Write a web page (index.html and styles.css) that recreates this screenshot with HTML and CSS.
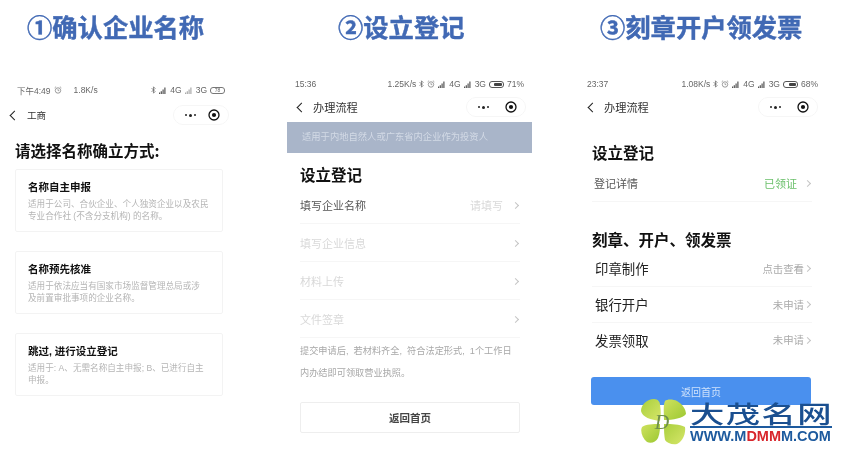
FILE: index.html
```html
<!DOCTYPE html>
<html lang="zh-CN">

<head>
    <meta charset="UTF-8">
    <meta name="viewport" content="width=device-width, initial-scale=1.0">
    <title>办理流程</title>
    <link rel="stylesheet" href="styles.css">
</head>

<body>
    <!-- shared status bar and capsule icons -->
    <svg class="defs" width="0" height="0">
        <symbol id="bt" viewBox="0 0 6 10">
            <path d="M0.6 2.6 L5 7 L3 9 V1 L5 3 L0.6 7.4" fill="none" stroke="#666" stroke-width="0.9" />
        </symbol>
        <symbol id="alarm" viewBox="0 0 10 10">
            <circle cx="5" cy="5.6" r="3.4" fill="none" stroke="#777" stroke-width="0.9" />
            <path d="M0.8 2.4 L2.6 0.8 M9.2 2.4 L7.4 0.8 M5 3.6 V5.8 H6.6" fill="none" stroke="#777" stroke-width="0.8" />
        </symbol>
        <symbol id="signal" viewBox="0 0 8 7">
            <path d="M0.5 7 V5.6 M2.3 7 V4.2 M4.1 7 V2.6 M5.9 7 V0.6" stroke="#555" stroke-width="1.2" />
        </symbol>
        <symbol id="target" viewBox="0 0 12 12">
            <circle cx="6" cy="6" r="5" fill="none" stroke="#111" stroke-width="1.3" />
            <circle cx="6" cy="6" r="2.1" fill="#111" />
        </symbol>
    </svg>

    <main class="board">
        <!-- step 1 -->
        <section class="shot shot-name">
            <h1 class="step-title">①确认企业名称</h1>
            <div class="status-bar">
                <div class="status-side">
                    <span>下午4:49</span>
                    <svg class="ico-alarm"><use href="#alarm" /></svg>
                    <span class="speed">1.8K/s</span>
                </div>
                <div class="status-side">
                    <svg class="ico-bt"><use href="#bt" /></svg>
                    <svg class="ico-signal"><use href="#signal" /></svg>
                    <span>4G</span>
                    <svg class="ico-signal faded"><use href="#signal" /></svg>
                    <span>3G</span>
                    <span class="battery-num">78</span>
                </div>
            </div>
            <div class="nav-bar">
                <i class="back"></i>
                <span class="nav-title">工商</span>
                <div class="capsule">
                    <span class="dots"><b></b><b class="big"></b><b></b></span>
                    <svg class="ico-target"><use href="#target" /></svg>
                </div>
            </div>
            <h2 class="choose-title">请选择名称确立方式:</h2>
            <div class="card">
                <h3>名称自主申报</h3>
                <p>适用于公司、合伙企业、个人独资企业以及农民<br>专业合作社 (不含分支机构) 的名称。</p>
            </div>
            <div class="card">
                <h3>名称预先核准</h3>
                <p>适用于依法应当有国家市场监督管理总局或涉<br>及前置审批事项的企业名称。</p>
            </div>
            <div class="card">
                <h3>跳过, 进行设立登记</h3>
                <p>适用于: A、无需名称自主申报; B、已进行自主<br>申报。</p>
            </div>
        </section>

        <!-- step 2 -->
        <section class="shot shot-register">
            <h1 class="step-title">②设立登记</h1>
            <div class="status-bar">
                <div class="status-side"><span>15:36</span></div>
                <div class="status-side">
                    <span>1.25K/s</span>
                    <svg class="ico-bt"><use href="#bt" /></svg>
                    <svg class="ico-alarm"><use href="#alarm" /></svg>
                    <svg class="ico-signal"><use href="#signal" /></svg>
                    <span>4G</span>
                    <svg class="ico-signal"><use href="#signal" /></svg>
                    <span>3G</span>
                    <span class="battery"><i class="w71"></i></span>
                    <span>71%</span>
                </div>
            </div>
            <div class="nav-bar">
                <i class="back"></i>
                <span class="nav-title">办理流程</span>
                <div class="capsule">
                    <span class="dots"><b></b><b class="big"></b><b></b></span>
                    <svg class="ico-target"><use href="#target" /></svg>
                </div>
            </div>
            <div class="banner">适用于内地自然人或广东省内企业作为投资人</div>
            <h2 class="block-title">设立登记</h2>
            <div class="rows">
                <div class="row"><span>填写企业名称</span><span class="row-end"><span class="hint">请填写</span><i class="chev"></i></span></div>
                <div class="row off"><span>填写企业信息</span><span class="row-end"><i class="chev"></i></span></div>
                <div class="row off"><span>材料上传</span><span class="row-end"><i class="chev"></i></span></div>
                <div class="row off"><span>文件签章</span><span class="row-end"><i class="chev"></i></span></div>
            </div>
            <p class="note">提交申请后, 若材料齐全, 符合法定形式, 1个工作日<br>内办结即可领取营业执照。</p>
            <div class="btn btn-plain">返回首页</div>
        </section>

        <!-- step 3 -->
        <section class="shot shot-finish">
            <h1 class="step-title">③刻章开户领发票</h1>
            <div class="status-bar">
                <div class="status-side"><span>23:37</span></div>
                <div class="status-side">
                    <span>1.08K/s</span>
                    <svg class="ico-bt"><use href="#bt" /></svg>
                    <svg class="ico-alarm"><use href="#alarm" /></svg>
                    <svg class="ico-signal"><use href="#signal" /></svg>
                    <span>4G</span>
                    <svg class="ico-signal"><use href="#signal" /></svg>
                    <span>3G</span>
                    <span class="battery"><i class="w68"></i></span>
                    <span>68%</span>
                </div>
            </div>
            <div class="nav-bar">
                <i class="back"></i>
                <span class="nav-title">办理流程</span>
                <div class="capsule">
                    <span class="dots"><b></b><b class="big"></b><b></b></span>
                    <svg class="ico-target"><use href="#target" /></svg>
                </div>
            </div>
            <h2 class="block-title">设立登记</h2>
            <div class="rows">
                <div class="row"><span>登记详情</span><span class="row-end"><span class="done">已领证</span><i class="chev"></i></span></div>
            </div>
            <h2 class="block-title second">刻章、开户、领发票</h2>
            <div class="rows big-rows">
                <div class="row"><span>印章制作</span><span class="row-end"><span class="state">点击查看</span><i class="chev"></i></span></div>
                <div class="row"><span>银行开户</span><span class="row-end"><span class="state">未申请</span><i class="chev"></i></span></div>
                <div class="row"><span>发票领取</span><span class="row-end"><span class="state">未申请</span><i class="chev"></i></span></div>
            </div>
            <div class="btn btn-blue">返回首页</div>
        </section>
    </main>

    <!-- site watermark, sits on top of the third shot -->
    <div class="watermark">
        <svg class="clover" viewBox="0 0 48 50">
            <defs>
                <linearGradient id="leaf-a" x1="0" y1="0" x2="1" y2="1">
                    <stop offset="0" stop-color="#a9cf3c" />
                    <stop offset="1" stop-color="#d6e66a" />
                </linearGradient>
                <linearGradient id="leaf-b" x1="1" y1="1" x2="0" y2="0">
                    <stop offset="0" stop-color="#9cc832" />
                    <stop offset="1" stop-color="#cfe25e" />
                </linearGradient>
            </defs>
            <path d="M21 24 C12 23 3 20 2 14 C2 8 8 2 15 2 C19 2 21 5 21 8 C22 14 22 19 21 24 Z" fill="url(#leaf-a)" />
            <path d="M25 23 C25 16 24 8 26 4 C28 2 34 2 38 4 C43 7 47 12 47 17 C44 21 34 23 25 23 Z" fill="url(#leaf-b)" />
            <path d="M21 27 C14 27 7 27 3 30 C1 34 3 41 8 45 C12 47 17 45 19 41 C21 36 21 31 21 27 Z" fill="url(#leaf-b)" />
            <path d="M25 27 C33 27 40 27 46 30 C47 36 44 44 38 47 C33 48 28 46 26 43 C25 38 25 32 25 27 Z" fill="url(#leaf-a)" />
            <text x="23" y="32" class="clover-d">D</text>
        </svg>
        <div class="mark-text">
            <div class="mark-cn"><span>大茂名网</span></div>
            <div class="mark-url">WWW.M<em>DMM</em>M.COM</div>
        </div>
    </div>
</body>

</html>
```

FILE: styles.css
```css
/* Global Styles */
* {
    box-sizing: border-box;
}

body {
    margin: 0;
    width: 841px;
    height: 454px;
    overflow: hidden;
    position: relative;
    background-color: #fff;
    color: #111;
    font-family: "Liberation Sans", "Noto Sans CJK SC", sans-serif;
}

.defs {
    position: absolute;
}

.board {
    display: grid;
    grid-template-columns: 280px 281px 280px;
    filter: blur(0.35px);
}

.shot {
    height: 454px;
}

.step-title {
    margin: 0;
    height: 52px;
    line-height: 52px;
    font-family: "Noto Sans CJK SC", sans-serif;
    font-size: 25.3px;
    font-weight: 700;
    color: #4169b4;
    -webkit-text-stroke: 0.4px #4169b4;
    white-space: nowrap;
}

/* Status bar */
.status-bar {
    display: flex;
    justify-content: space-between;
    align-items: center;
    height: 14px;
    font-size: 8.5px;
    color: #666;
    white-space: nowrap;
}

.status-side {
    display: flex;
    align-items: center;
    gap: 3px;
}

.speed {
    margin-left: 9px;
}

.ico-bt {
    width: 5px;
    height: 8px;
}

.ico-alarm {
    width: 8px;
    height: 8px;
}

.ico-signal {
    width: 8px;
    height: 7px;
}

.ico-signal.faded {
    opacity: 0.5;
}

.battery {
    display: block;
    width: 15px;
    height: 7px;
    padding: 1px;
    border: 1px solid #555;
    border-radius: 3px;
}

.battery i {
    display: block;
    height: 100%;
    background-color: #444;
    border-radius: 1px;
}

.battery .w71 {
    width: 71%;
    margin-left: auto;
}

.battery .w68 {
    width: 68%;
    margin-left: auto;
}

.battery-num {
    width: 15px;
    height: 7px;
    border: 1px solid #777;
    border-radius: 3px;
    font-size: 5px;
    line-height: 5px;
    text-align: center;
}

/* Nav bar */
.nav-bar {
    display: flex;
    align-items: center;
    height: 28px;
}

.back {
    width: 7px;
    height: 7px;
    margin-left: 2px;
    border-left: 1.2px solid #222;
    border-bottom: 1.2px solid #222;
    transform: rotate(45deg);
}

.nav-title {
    margin-left: 8px;
    font-size: 11.2px;
    color: #333;
}

.capsule {
    display: flex;
    justify-content: space-between;
    align-items: center;
    width: 60px;
    height: 20px;
    margin-left: auto;
    padding: 0 8px 0 11px;
    border: 1px solid #f6f6f6;
    border-radius: 10px;
}

.dots {
    display: flex;
    align-items: center;
    gap: 2px;
}

.dots b {
    width: 2px;
    height: 2px;
    border-radius: 50%;
    background-color: #222;
}

.dots .big {
    width: 3px;
    height: 3px;
}

.ico-target {
    width: 12px;
    height: 12px;
}

/* Step 1 */
.shot-name {
    padding: 0 57px 0 15px;
}

.shot-name .step-title {
    margin-left: -15px;
    padding-left: 27px;
}

.shot-name .status-bar {
    margin-top: 31px;
    margin-right: -2px;
    padding-left: 2px;
}

.shot-name .nav-bar {
    margin: 4px -6px 0 -6px;
}

.shot-name .nav-title {
    margin-left: 9px;
    font-size: 9.6px;
}

.shot-name .capsule {
    width: 56px;
}

.choose-title {
    margin: 11px 0 9px;
    font-family: "Noto Sans CJK SC", sans-serif;
    font-size: 15.5px;
    line-height: 20px;
    font-weight: 700;
    white-space: nowrap;
}

.card {
    height: 63px;
    margin-bottom: 19px;
    padding: 10px 6px 0 12px;
    border: 1px solid #f3f3f3;
    border-radius: 2px;
}

.card h3 {
    margin: 0;
    font-size: 10.5px;
    line-height: 14px;
    font-weight: 700;
}

.card p {
    margin: 4px 0 0;
    font-size: 8.6px;
    line-height: 12px;
    color: #b5b5b5;
    white-space: nowrap;
}

/* Step 2 */
.shot-register {
    padding: 0 29px 0 7px;
}

.shot-register .step-title {
    padding-left: 51px;
}

.shot-register .status-bar {
    margin-top: 25px;
    padding: 0 8px;
}

.shot-register .nav-bar {
    margin-top: 2px;
    padding: 0 6px 0 9px;
}

.banner {
    height: 31px;
    margin-top: 1px;
    padding-left: 15px;
    line-height: 31px;
    font-size: 9.3px;
    color: #d3dae6;
    background-color: #a9b5c9;
    white-space: nowrap;
}

.block-title {
    margin: 11px 0 0 13px;
    font-family: "Noto Sans CJK SC", sans-serif;
    font-size: 15.5px;
    line-height: 20px;
    font-weight: 700;
}

.rows {
    margin: 2px 12px 0 13px;
}

.row {
    display: flex;
    justify-content: space-between;
    align-items: center;
    height: 38px;
    border-bottom: 1px solid #f6f6f6;
    font-size: 11px;
    color: #555;
}

.row.off {
    color: #d9d9d9;
}

.row-end {
    display: flex;
    align-items: center;
}

.hint {
    margin-right: 9px;
    color: #d9d9d9;
}

.chev {
    display: block;
    width: 5px;
    height: 5px;
    margin: 1px 2px 0 1px;
    border-top: 1px solid #c4c4c4;
    border-right: 1px solid #c4c4c4;
    transform: rotate(45deg);
}

.note {
    margin: 3px 0 0 13px;
    font-size: 9.2px;
    line-height: 21.5px;
    word-spacing: 2.5px;
    color: #a8a8a8;
    white-space: nowrap;
}

.btn {
    display: flex;
    justify-content: center;
    align-items: center;
    border-radius: 2px;
}

.btn-plain {
    height: 31px;
    margin: 18px 12px 0 13px;
    border: 1px solid #eee;
    font-size: 10.5px;
    font-weight: 700;
    color: #444;
}

/* Step 3 */
.shot-finish {
    padding: 0 23px 0 26px;
}

.shot-finish .step-title {
    padding-left: 13px;
}

.shot-finish .status-bar {
    margin-top: 25px;
}

.shot-finish .nav-bar {
    margin-top: 2px;
}

.shot-finish .block-title {
    margin: 21px 0 0 5px;
}

.shot-finish .block-title.second {
    margin-top: 27px;
}

.shot-finish .rows {
    margin: 4px 6px 0 5px;
}

.shot-finish .row {
    height: 36px;
    padding: 0 0 2px 2px;
}

.done {
    margin-right: 7px;
    color: #6cc06c;
}

.shot-finish .big-rows {
    margin-top: 2px;
}

.shot-finish .big-rows .row {
    padding: 0 0 1px 3px;
    font-size: 13.4px;
    color: #222;
}

.shot-finish .big-rows .row:last-child {
    padding-bottom: 3px;
    border-bottom: none;
}

.state {
    margin-right: 1px;
    font-size: 10.4px;
    color: #aaa;
}

.big-rows .chev {
    margin-left: 0;
}

.btn-blue {
    height: 28px;
    margin: 18px 7px 0 4px;
    font-size: 10px;
    color: #cfe2fb;
    background-color: #4a90ee;
    border-radius: 3px;
}

/* Watermark */
.watermark {
    position: absolute;
    left: 639px;
    top: 397px;
    display: flex;
    align-items: flex-start;
    gap: 3px;
    filter: blur(0.3px);
}

.clover {
    width: 48px;
    height: 50px;
}

.clover-d {
    font-family: "Liberation Serif", serif;
    font-style: italic;
    font-size: 20px;
    text-anchor: middle;
    fill: #6f8f4c;
}

.mark-text {
    width: 142px;
    margin-top: 3px;
}

.mark-cn {
    height: 28px;
    border-bottom: 2px solid #1d5a9e;
    font-family: "Noto Sans CJK SC", sans-serif;
    font-size: 24px;
    line-height: 25px;
    font-weight: 500;
    color: #1a4f90;
    white-space: nowrap;
}

.mark-cn span {
    display: inline-block;
    letter-spacing: 1px;
    transform: scaleX(1.43);
    transform-origin: left center;
}

.mark-url {
    margin-top: 1px;
    font-size: 14.5px;
    line-height: 15px;
    font-weight: 700;
    color: #1d5a9e;
    white-space: nowrap;
}

.mark-url em {
    font-style: normal;
    color: #d8262c;
}
```
